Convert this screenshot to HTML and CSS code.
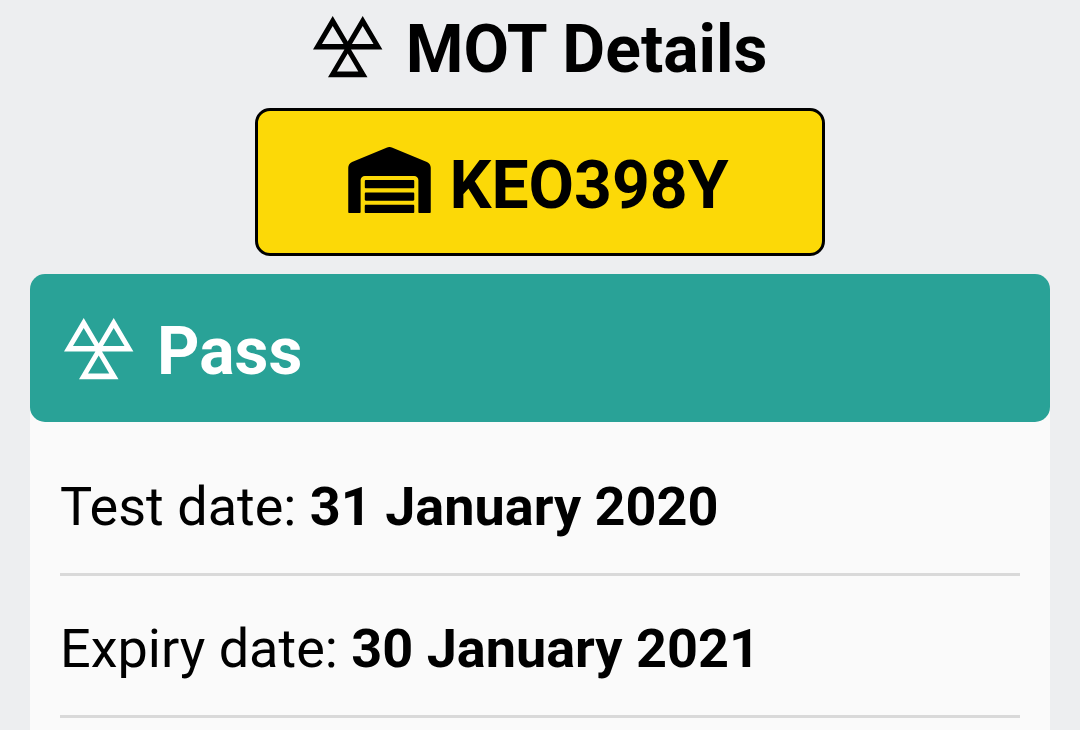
FILE: index.html
```html
<!DOCTYPE html>
<html lang="en">
<head>
<meta charset="utf-8">
<meta name="viewport" content="width=device-width, initial-scale=1">
<title>MOT Details</title>
<link rel="stylesheet" href="styles.css">
</head>
<body>
<svg class="symbols" aria-hidden="true">
  <symbol id="mot" viewBox="0 0 70 62">
    <path fill="currentColor" d="M0 33.500 19.700 0 34.700 25.500 49.700 0 69.400 33.500H38L54.500 61.300H15L31.400 33.500ZM9 28H30.500L19.700 10ZM39 28H60.500L49.700 10ZM24 55.500H45.300L34.700 37.500Z" fill-rule="evenodd"/>
  </symbol>
</svg>
<main class="page">
  <h1 class="title"><svg class="mot-icon" aria-hidden="true"><use href="#mot"/></svg>MOT Details</h1>
  <div class="plate">
    <svg class="garage" viewBox="0 0 640 512" aria-hidden="true"><path fill="currentColor" d="M504 352H136.400c-4.400 0-8 3.600-8 8l-.1 48c0 4.400 3.600 8 8 8H504c4.400 0 8-3.600 8-8v-48c0-4.400-3.600-8-8-8zm0 96H136.100c-4.400 0-8 3.600-8 8l-.1 48c0 4.400 3.600 8 8 8h368c4.400 0 8-3.600 8-8v-48c0-4.400-3.600-8-8-8zm0-192H136.600c-4.400 0-8 3.600-8 8l-.1 48c0 4.400 3.600 8 8 8H504c4.400 0 8-3.600 8-8v-48c0-4.400-3.600-8-8-8zm106.500-139L338.400 3.700a48.150 48.150 0 0 0-36.900 0L29.500 117C11.700 124.500 0 141.900 0 161.300V504c0 4.400 3.600 8 8 8h80c4.400 0 8-3.600 8-8V256c0-17.600 14.600-32 32.600-32h382.800c18 0 32.600 14.400 32.600 32v248c0 4.400 3.600 8 8 8h80c4.400 0 8-3.600 8-8V161.300c0-19.400-11.700-36.800-29.500-44.300z"/></svg>
    <span>KEO398Y</span>
  </div>
  <section class="card">
    <h2 class="result"><svg class="mot-icon" aria-hidden="true"><use href="#mot"/></svg>Pass</h2>
    <ul class="details">
      <li>Test date: <strong>31 January 2020</strong></li>
      <li>Expiry date: <strong>30 January 2021</strong></li>
    </ul>
  </section>
</main>
</body>
</html>
```
FILE: styles.css
```css
* { box-sizing: border-box; }
body {
  margin: 0;
  background: #edeef0;
  color: #000;
  font-family: Roboto, "Liberation Sans", sans-serif;
  font-size: 54px;
}
.symbols { position: absolute; width: 0; height: 0; }
.page {
  display: flex;
  flex-direction: column;
  min-height: 100vh;
  padding: 0 30px;
}
.title, .result {
  display: flex;
  align-items: center;
  gap: 23px;
  margin: 0;
  font-size: 66px;
  line-height: 84px;
  font-weight: 700;
}
.title { justify-content: center; padding: 8px 0 16px; }
.mot-icon { width: 70px; height: 62px; margin-bottom: 6px; flex: none; }
.plate {
  display: flex;
  align-items: center;
  justify-content: center;
  gap: 18px;
  width: 100%;
  max-width: 570px;
  margin: 0 auto 18px;
  padding: 33px 27px 25px 24px;
  border: 3px solid #000;
  border-radius: 15px;
  background: #fcd907;
  font-size: 66px;
  line-height: 84px;
  font-weight: 700;
}
.garage { width: 83px; height: 66px; margin-bottom: 12px; flex: none; }
.card {
  flex: 1;
  border-radius: 15px 15px 0 0;
  background: #fafafa;
}
.result {
  padding: 36px 34px 28px;
  border-radius: 15px;
  background: #29a297;
  color: #fff;
}
.details { list-style: none; margin: 0; padding: 12px 30px; }
.details li {
  padding: 39px 0 33px;
  border-bottom: 3px solid #d9d9d9;
  line-height: 67px;
}
```
